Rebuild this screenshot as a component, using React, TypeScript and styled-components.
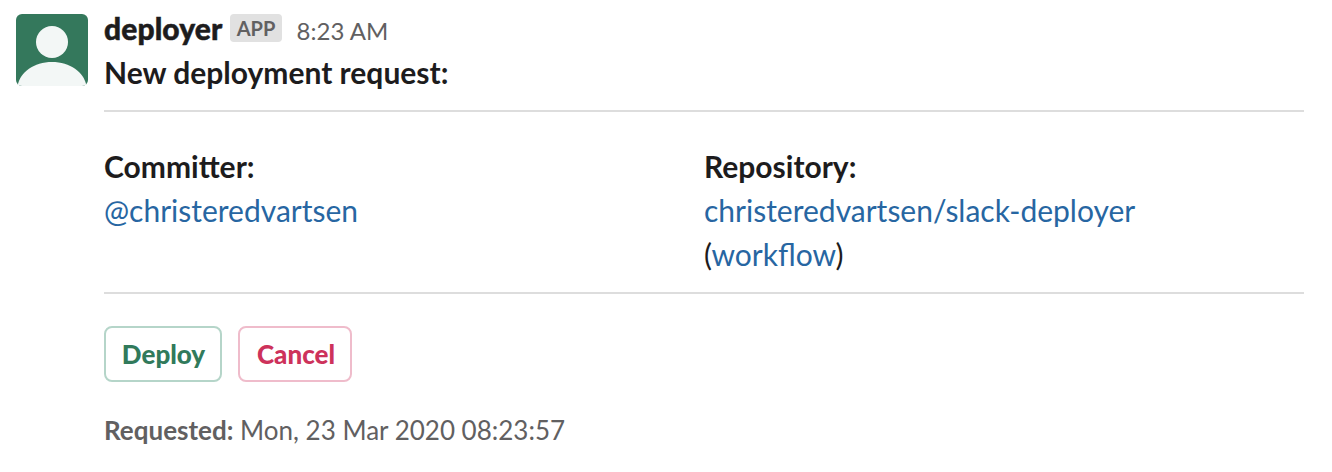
import React from "react";
import styled, { createGlobalStyle } from "styled-components";

const GlobalStyle = createGlobalStyle`
  * { box-sizing: border-box; }
  body { margin: 0; background: #fff; color: #1d1c1d; font-family: Lato, "Liberation Sans", sans-serif; font-size: 30px; line-height: 44px; }
`;
const Message = styled.article`
  display: flex; gap: 16px; width: 1332px; height: 472px; padding: 14px 28px 0 16px;
`;
const Avatar = styled.svg`
  width: 72px; height: 72px; flex: none; border-radius: 6px;
`;
const Body = styled.div`
  flex: 1; min-width: 0;
`;
const Header = styled.header`
  display: flex; align-items: flex-start; height: 32px; margin-bottom: 4px;
`;
const Name = styled.span`
  width: 118px; font-weight: 900; line-height: 28px; letter-spacing: 0.1px;
  -webkit-text-stroke: 0.5px currentColor;
`;
const Badge = styled.span`
  margin: 0 14.6px 0 8px; width: 52px; height: 28px; border-radius: 4px; background: #e1e1e1;
  color: #616061; font-size: 20px; font-weight: 700; line-height: 29px; text-align: center;
`;
const Time = styled.time`
  color: #616061; font-size: 24px; line-height: 34px;
`;
const Strong = styled.strong`
  display: block; font-weight: 700;
`;
const Divider = styled.hr`
  height: 2px; margin: 16px 0 0; border: 0; background: #dddddd;
`;
const Fields = styled.div`
  display: grid; grid-template-columns: 600px 600px; padding-top: 32px;
`;
const Link = styled.a`
  color: #2766a2; text-decoration: none;
`;
const Actions = styled.div`
  display: flex; gap: 16px; margin-top: 32px;
`;
const Button = styled.button<{ $color: string; $border: string; $width: number; $inset: number }>`
  width: ${(p) => p.$width}px; height: 56px; padding: 0 0 0 ${(p) => p.$inset}px; border: 2px solid ${(p) => p.$border};
  border-radius: 8px; background: #fff; color: ${(p) => p.$color};
  font: 900 26px/52px Lato, sans-serif; text-align: center;
`;
const Footer = styled.footer`
  margin-top: 26px; color: #616061; font-size: 26px;
`;

export default function App() {
  return (
    <>
      <GlobalStyle />
      <Message>
        <Avatar viewBox="0 0 72 72" aria-hidden="true">
          <rect width="72" height="72" fill="#34785c" />
          <circle cx="36" cy="28" r="16" fill="#f3f7f6" />
          <path d="M1.5 72C4 58 18 48 36 48s32 10 34.5 24z" fill="#f3f7f6" />
        </Avatar>
        <Body>
          <Header>
            <Name>deployer</Name>
            <Badge>APP</Badge>
            <Time>8:23 AM</Time>
          </Header>
          <Strong>New deployment request:</Strong>
          <Divider />
          <Fields>
            <div>
              <Strong>Committer:</Strong>
              <Link>@christeredvartsen</Link>
            </div>
            <div>
              <Strong>Repository:</Strong>
              <Link>christeredvartsen/slack-deployer</Link>
              <div>(<Link>workflow</Link>)</div>
            </div>
          </Fields>
          <Divider />
          <Actions>
            <Button $color="#317a5b" $border="#b5d5c9" $width={118} $inset={1}>Deploy</Button>
            <Button $color="#cd325b" $border="#efbccb" $width={114} $inset={2}>Cancel</Button>
          </Actions>
          <Footer><b>Requested:</b> Mon, 23 Mar 2020 08:23:57</Footer>
        </Body>
      </Message>
    </>
  );
}
